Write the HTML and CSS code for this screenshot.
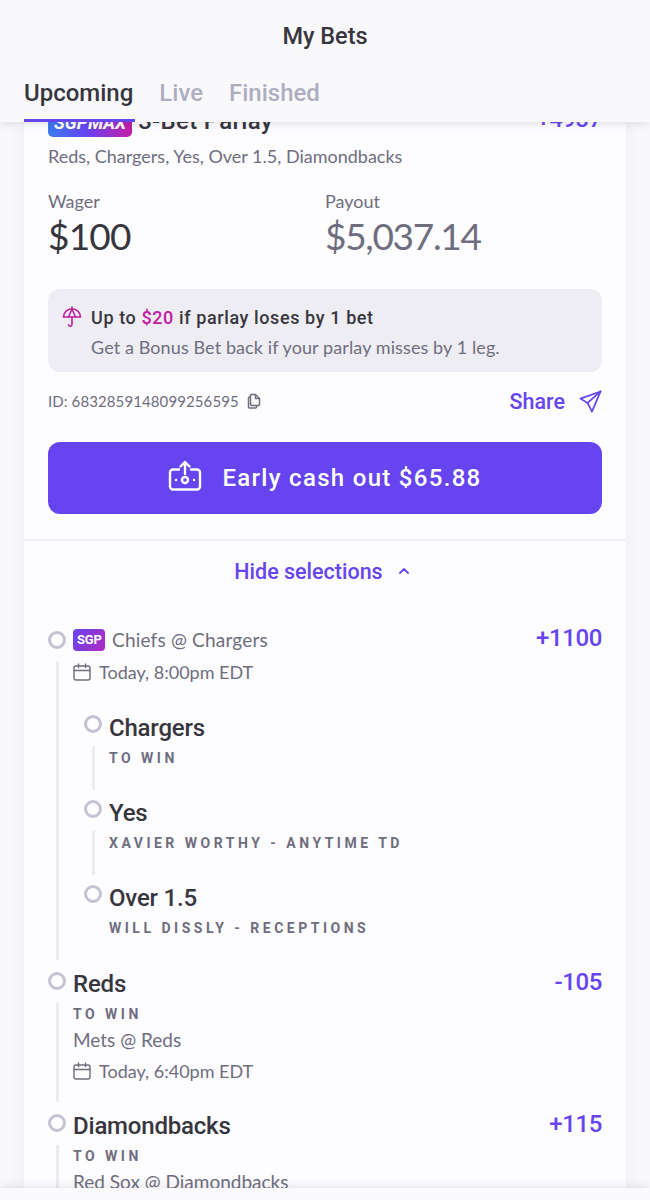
FILE: index.html
```html
<!DOCTYPE html>
<html lang="en">
<head>
  <meta charset="UTF-8">
  <meta name="viewport" content="width=device-width, initial-scale=1.0">
  <title>My Bets</title>
  <link rel="stylesheet" href="styles.css">
</head>
<body>
  <div class="screen">
    <header class="top">
      <h1 class="top-title">My Bets</h1>
      <nav class="tabs">
        <a class="tab active">Upcoming</a>
        <a class="tab">Live</a>
        <a class="tab">Finished</a>
      </nav>
    </header>

    <main class="card">
      <section class="summary">
        <div class="bet-head">
          <span class="badge-max">SGPMAX</span>
          <span class="bet-name">3-Bet Parlay</span>
          <span class="bet-odds">+4937</span>
        </div>
        <p class="bet-legs">Reds, Chargers, Yes, Over 1.5, Diamondbacks</p>

        <div class="amounts">
          <div class="amount">
            <span class="amount-label">Wager</span>
            <span class="amount-value">$100</span>
          </div>
          <div class="amount">
            <span class="amount-label">Payout</span>
            <span class="amount-value muted">$5,037.14</span>
          </div>
        </div>

        <div class="promo">
          <div class="promo-head">
            <svg class="promo-icon" viewBox="0 0 20 22" fill="none" stroke="currentColor" stroke-width="1.6" stroke-linecap="round" stroke-linejoin="round">
              <path d="M10 1v1.600M1.400 11C1.800 6.300 5.400 2.800 10 2.800s8.200 3.500 8.600 8.200z"/>
              <path d="M6.500 11 10 3l3.500 8"/>
              <path d="M10 11v7.600c0 2-3 2.200-3.400 .2"/>
            </svg>
            <span class="promo-title">Up to <b class="promo-amt">$20</b> if parlay loses by 1 bet</span>
          </div>
          <p class="promo-text">Get a Bonus Bet back if your parlay misses by 1 leg.</p>
        </div>

        <div class="id-row">
          <span class="bet-id">ID: 6832859148099256595</span>
          <svg class="copy-icon" viewBox="0 0 16 16" fill="none" stroke="currentColor" stroke-width="1.500" stroke-linejoin="round">
            <path d="M5 1.500h4.500L13.500 5.500V11.500a1 1 0 0 1-1 1H5.500a1 1 0 0 1-1-1V2z"/>
            <path d="M9.500 1.500v4h4"/>
            <path d="M4.500 4H3.500a1 1 0 0 0-1 1V14a1 1 0 0 0 1 1h6a1 1 0 0 0 1-1v-1.500"/>
          </svg>
          <a class="share">Share
            <svg class="share-icon" viewBox="0 0 24 24" fill="none" stroke="currentColor" stroke-width="1.800" stroke-linejoin="round" stroke-linecap="round">
              <path d="M22.500 1.500 1.500 9l7.500 4.500 4.500 9z"/>
              <path d="M22.500 1.500 9 13.500"/>
            </svg>
          </a>
        </div>

        <button class="cashout">
          <svg class="cash-icon" viewBox="0 0 34 31" fill="none" stroke="currentColor" stroke-width="2.400" stroke-linecap="round" stroke-linejoin="round">
            <path d="M11 9.500H5a3 3 0 0 0-3 3v14a3 3 0 0 0 3 3h24a3 3 0 0 0 3-3v-14a3 3 0 0 0-3-3h-6"/>
            <path d="M17 14V2M12.500 6.500 17 2l4.500 4.500"/>
            <circle cx="17" cy="20" r="3"/>
            <path d="M8 20h.1M26 20h.1"/>
          </svg>
          Early cash out $65.88
        </button>
      </section>

      <a class="toggle">Hide selections
        <svg class="chevron" viewBox="0 0 12 8" fill="none" stroke="currentColor" stroke-width="1.800" stroke-linecap="round" stroke-linejoin="round"><path d="M2 6l4-4 4 4"/></svg>
      </a>

      <section class="legs">
        <div class="leg">
          <div class="leg-head sgp-head">
            <i class="dot"></i>
            <span class="badge-sgp">SGP</span>
            <span class="game">Chiefs @ Chargers</span>
            <span class="odds">+1100</span>
          </div>
          <div class="leg-body sgp-body">
            <div class="when">
              <svg class="cal" viewBox="0 0 18 18" fill="none" stroke="currentColor" stroke-width="1.400" stroke-linecap="round"><rect x="1" y="3" width="16" height="14" rx="2"/><path d="M1 7.500h16M5.500 1v3.500M12.500 1v3.500"/></svg>
              Today, 8:00pm EDT
            </div>
            <div class="sub-legs">
              <div class="sub-leg">
                <div class="leg-head"><i class="dot"></i><span class="pick">Chargers</span></div>
                <div class="leg-body"><span class="market">TO WIN</span></div>
              </div>
              <div class="sub-leg">
                <div class="leg-head"><i class="dot"></i><span class="pick">Yes</span></div>
                <div class="leg-body"><span class="market">XAVIER WORTHY - ANYTIME TD</span></div>
              </div>
              <div class="sub-leg">
                <div class="leg-head"><i class="dot"></i><span class="pick">Over 1.5</span></div>
                <div class="leg-body no-line"><span class="market">WILL DISSLY - RECEPTIONS</span></div>
              </div>
            </div>
          </div>
        </div>

        <div class="leg">
          <div class="leg-head">
            <i class="dot"></i>
            <span class="pick">Reds</span>
            <span class="odds">-105</span>
          </div>
          <div class="leg-body">
            <span class="market">TO WIN</span>
            <span class="game">Mets @ Reds</span>
            <div class="when">
              <svg class="cal" viewBox="0 0 18 18" fill="none" stroke="currentColor" stroke-width="1.400" stroke-linecap="round"><rect x="1" y="3" width="16" height="14" rx="2"/><path d="M1 7.500h16M5.500 1v3.500M12.500 1v3.500"/></svg>
              Today, 6:40pm EDT
            </div>
          </div>
        </div>

        <div class="leg">
          <div class="leg-head">
            <i class="dot"></i>
            <span class="pick">Diamondbacks</span>
            <span class="odds">+115</span>
          </div>
          <div class="leg-body">
            <span class="market">TO WIN</span>
            <span class="game">Red Sox @ Diamondbacks</span>
          </div>
        </div>
      </section>
    </main>

    <div class="bottom-bar"></div>
  </div>
</body>
</html>
```

FILE: styles.css
```css
* {
  box-sizing: border-box;
}
body {
  margin: 0;
  font-family: Lato, Roboto, sans-serif;
  background-color: #f9f9fb;
  color: #37363e;
}
p, h1 {
  margin: 0;
}
.screen {
  position: relative;
  height: 1200px;
  overflow: hidden;
  padding-top: 109px;
}

/* header sits over the scrolled card */
.top {
  position: absolute;
  top: 0;
  left: 0;
  right: 0;
  height: 122px;
  z-index: 2;
  background-color: #f9f9fb;
  box-shadow: 0 2px 8px rgba(40, 40, 60, 0.12);
  font-family: Roboto, sans-serif;
}
.top-title {
  padding-top: 22px;
  font-size: 23.500px;
  line-height: 28px;
  font-weight: 500;
  text-align: center;
}
.tabs {
  display: flex;
  gap: 26px;
  padding: 28px 24px 0;
}
.tab {
  position: relative;
  height: 44px;
  font-size: 24px;
  line-height: 30px;
  font-weight: 500;
  color: #aeadc0;
}
.tab.active {
  color: #37363e;
}
.tab.active::after {
  content: "";
  position: absolute;
  left: 0;
  right: -2px;
  bottom: 0;
  height: 3px;
  background-color: #6645f0;
}

.card {
  width: 602px;
  min-height: 1100px;
  margin-left: 24px;
  background-color: #fdfcfe;
  box-shadow: 0 0 20px rgba(40, 40, 60, 0.05);
}
.summary {
  padding: 0 24px 25px;
  border-bottom: 2px solid #f0f0f3;
}
.bet-head {
  display: flex;
  align-items: center;
  height: 28px;
  font-family: Roboto, sans-serif;
}
.badge-max {
  padding: 0 6px;
  height: 28px;
  line-height: 28px;
  border-radius: 5px;
  font-size: 18px;
  font-weight: 700;
  font-style: italic;
  color: #fff;
  background: linear-gradient(90deg, #3d7bf0, #6645f0 45%, #c41ea8);
}
.bet-name {
  margin: 0 0 4px 6px;
  font-size: 24px;
  font-weight: 500;
  letter-spacing: 0.3px;
}
.bet-odds {
  margin: 0 0 8px auto;
  font-size: 23px;
  font-weight: 500;
  color: #6645f0;
}
.bet-legs {
  margin-top: 8px;
  font-size: 18px;
  line-height: 22px;
  color: #6f6e7e;
}
.amounts {
  display: flex;
  margin-top: 23px;
}
.amount {
  display: flex;
  flex-direction: column;
  flex: 0 0 277px;
}
.amount-label {
  font-size: 18px;
  line-height: 22px;
  color: #6f6e7e;
}
.amount-value {
  margin-top: 1px;
  font-size: 37px;
  line-height: 46px;
  letter-spacing: -0.8px;
}
.amount-value.muted {
  letter-spacing: -1.300px;
  color: #6f6e7e;
}
.promo {
  margin-top: 30px;
  height: 83px;
  padding: 17px 14px;
  border-radius: 12px;
  background-color: #eeedf3;
}
.promo-head {
  display: flex;
  align-items: center;
  gap: 9px;
}
.promo-icon {
  width: 20px;
  height: 22px;
  color: #c0209f;
}
.promo-title {
  font-family: Roboto, sans-serif;
  font-size: 18px;
  font-weight: 500;
  letter-spacing: 0.6px;
}
.promo-amt {
  font-weight: 500;
  color: #c0209f;
}
.promo-text {
  margin: 8px 0 0 29px;
  font-size: 18px;
  line-height: 22px;
  letter-spacing: 0.1px;
  color: #6f6e7e;
}
.id-row {
  display: flex;
  align-items: center;
  height: 24px;
  margin-top: 17px;
  color: #6f6e7e;
}
.bet-id {
  font-size: 15px;
  letter-spacing: 0.1px;
}
.copy-icon {
  width: 16px;
  height: 16px;
  margin-left: 7px;
}
.share {
  display: flex;
  align-items: center;
  gap: 14px;
  margin-left: auto;
  font-family: Roboto, sans-serif;
  font-size: 21.500px;
  font-weight: 500;
  color: #6645f0;
}
.share-icon {
  width: 23px;
  height: 23px;
}
.cashout {
  display: flex;
  align-items: center;
  justify-content: center;
  gap: 20px;
  width: 100%;
  height: 72px;
  margin-top: 29px;
  border: none;
  border-radius: 12px;
  background-color: #6645f0;
  color: #fff;
  font-family: Roboto, sans-serif;
  font-size: 24px;
  font-weight: 500;
  letter-spacing: 1.300px;
}
.cash-icon {
  width: 34px;
  height: 31px;
  margin-bottom: 6px;
}
.toggle {
  display: flex;
  align-items: center;
  justify-content: center;
  gap: 15px;
  margin-top: 17px;
  padding-right: 6px;
  height: 26px;
  font-family: Roboto, sans-serif;
  font-size: 21.500px;
  font-weight: 500;
  color: #6645f0;
}
.chevron {
  width: 12px;
  height: 8px;
}

.legs {
  padding: 44px 24px 0;
}
.leg-head {
  display: flex;
  align-items: center;
  height: 24px;
}
.dot {
  flex: none;
  width: 18px;
  height: 18px;
  margin: 0 7px 6px 0;
  border: 3px solid #c4c3d4;
  border-radius: 50%;
}
.sgp-head .dot {
  margin-bottom: 0;
}
.badge-sgp {
  flex: none;
  padding: 0 4px;
  width: 32px;
  height: 22px;
  line-height: 22px;
  border-radius: 4px;
  font-family: Roboto, sans-serif;
  font-size: 13px;
  font-weight: 700;
  text-align: center;
  letter-spacing: -0.2px;
  color: #fff;
  background: linear-gradient(120deg, #6645f0, #b02cc0);
}
.game {
  display: block;
  margin-bottom: 8px;
  font-size: 19px;
  line-height: 24px;
  color: #6f6e7e;
}
.leg-head .game {
  margin: 0 0 0 7px;
  letter-spacing: 0.2px;
}
.odds {
  margin: 0 0 4px auto;
  font-family: Roboto, sans-serif;
  font-size: 24px;
  font-weight: 500;
  letter-spacing: -0.4px;
  color: #6645f0;
}
.pick {
  font-family: Roboto, sans-serif;
  font-size: 24px;
  font-weight: 500;
  letter-spacing: -0.2px;
}
.leg-body {
  margin: 7px 0 12px 8px;
  padding: 1px 0 20px 14px;
  border-left: 3px solid #ebebf0;
}
.sgp-body {
  margin-top: 9px;
  padding: 0 0 18px 14px;
}
.when {
  display: flex;
  align-items: center;
  gap: 8px;
  font-size: 18px;
  line-height: 22px;
  color: #6f6e7e;
}
.cal {
  width: 18px;
  height: 18px;
}
.market {
  display: block;
  margin-bottom: 4px;
  font-family: Roboto, sans-serif;
  font-size: 14px;
  line-height: 20px;
  font-weight: 700;
  letter-spacing: 3.500px;
  color: #6f6e7e;
}
.sub-legs {
  padding: 33px 0 2px 11px;
}
.sub-leg .dot {
  margin-bottom: 8px;
}
.sub-leg .leg-body {
  margin: 6px 0 11px 8px;
  padding: 2px 0 0 14px;
  height: 44px;
}
.sub-leg .no-line {
  height: 24px;
  margin-bottom: 0;
  border-left-color: transparent;
}

.bottom-bar {
  position: absolute;
  left: 0;
  right: 0;
  bottom: 0;
  height: 12px;
  z-index: 2;
  background-color: #fafafc;
  box-shadow: 0 -2px 8px rgba(40, 40, 60, 0.1);
}
```
